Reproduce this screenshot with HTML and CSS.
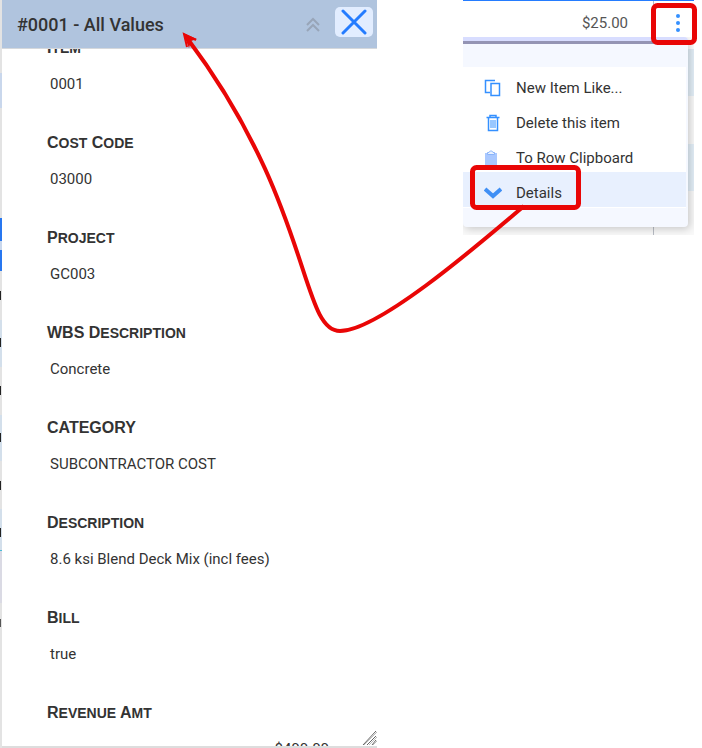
FILE: index.html
```html
<!DOCTYPE html>
<html lang="en">
<head>
  <meta charset="UTF-8">
  <title>#0001 - All Values</title>
  <link rel="stylesheet" href="styles.css">
</head>
<body>

<div class="page">

  <!-- Details panel -->
  <div class="panel-wrap">
    <div class="grid-edge"></div>
    <section class="panel">
      <header class="panel-header">
        <h1>#0001 - All Values</h1>
        <button class="collapse-btn" aria-label="Collapse">
          <svg width="14" height="16" viewBox="0 0 14 16"><path d="M1 8l6-6 6 6M1 14l6-6 6 6"/></svg>
        </button>
        <button class="close-btn" aria-label="Close">
          <svg width="26" height="26" viewBox="0 0 26 26"><path d="M2 2l22 22M24 2L2 24"/></svg>
        </button>
      </header>
      <div class="panel-body">
        <dl class="fields">
          <div class="field"><dt>I<small>tem</small></dt><dd>0001</dd></div>
          <div class="field"><dt>C<small>ost</small> C<small>ode</small></dt><dd>03000</dd></div>
          <div class="field"><dt>P<small>roject</small></dt><dd>GC003</dd></div>
          <div class="field"><dt>WBS D<small>escription</small></dt><dd>Concrete</dd></div>
          <div class="field"><dt>CATEGORY</dt><dd>SUBCONTRACTOR COST</dd></div>
          <div class="field"><dt>D<small>escription</small></dt><dd>8.6 ksi Blend Deck Mix (incl fees)</dd></div>
          <div class="field"><dt>B<small>ill</small></dt><dd>true</dd></div>
          <div class="field"><dt>R<small>evenue</small> A<small>mt</small></dt><dd class="amount">$400.00</dd></div>
        </dl>
        <svg class="resize" width="15" height="16" viewBox="0 0 15 16">
          <path class="shade" d="M2 15L15 2M7 15l8-8M11 15l4-4"/>
          <path d="M1 15L14 1M5 15l9-9M10 15l4-5"/>
        </svg>
      </div>
    </section>
  </div>

  <!-- Row with open menu -->
  <section class="row-area">
    <div class="row">
      <span class="price">$25.00</span>
      <button class="more-btn" aria-label="More">
        <svg width="6" height="20" viewBox="0 0 6 20"><circle cx="3" cy="3" r="2"/><circle cx="3" cy="10" r="2"/><circle cx="3" cy="17" r="2"/></svg>
      </button>
    </div>
    <div class="menu">
      <div class="menu-top"></div>
      <div class="menu-list">
        <button class="menu-item">
          <svg width="18" height="18" viewBox="0 0 18 18"><path class="line" d="M6 13.500H1.500V1.500H11M7 4.500h8.500v12H7z"/></svg>
          New Item Like...
        </button>
        <button class="menu-item">
          <svg width="18" height="18" viewBox="0 0 18 18"><path class="line" d="M2.500 3.500h13M6 3V1.500h6V3M4.500 4v12.500h9V4"/><path class="thin" d="M7 6v8M9 6v8M11 6v8"/></svg>
          Delete this item
        </button>
        <button class="menu-item">
          <svg width="18" height="18" viewBox="0 0 18 18"><path class="clip" d="M1 4h12v14H1z"/><path class="clip-top" d="M3.500 5.500v-2H5c0-2 4-2 4 0h1.500v2z"/></svg>
          To Row Clipboard
        </button>
        <button class="menu-item selected">
          <svg width="18" height="18" viewBox="0 0 18 18"><path class="chevron" d="M1 5l8 7 8-7"/></svg>
          Details
        </button>
      </div>
      <div class="menu-bottom"></div>
    </div>
  </section>

  <!-- Callout boxes and arrow -->
  <svg class="callout" width="702" height="748" viewBox="0 0 702 748">
    <rect x="653.500" y="5.500" width="41" height="37" rx="4"/>
    <rect x="472.500" y="167.500" width="106" height="40" rx="4"/>
    <path class="arrow" d="M524 206C470 252 377 331 340 331C300 331 312 204 187 38"/>
    <path class="head" d="M183 33l14 6-6 2-2 7z"/>
    <path class="tip" d="M187 47l-3-13 12 6"/>
  </svg>
</div>

</body>
</html>
```

FILE: styles.css
```css
* {
  box-sizing: border-box;
}

body {
  margin: 0;
  background: #fff;
  color: #333;
  font-family: Roboto, "Liberation Sans", sans-serif;
  font-size: 15px;
  line-height: 24px;
}

button {
  font: inherit;
  color: inherit;
  border: none;
  background: none;
  padding: 0;
  cursor: pointer;
}

svg {
  display: block;
  fill: none;
}

.page {
  position: relative;
  display: flex;
  align-items: flex-start;
  gap: 86px;
  height: 100vh;
  overflow: hidden;
}

.panel-wrap {
  display: flex;
  flex: 0 1 377px;
  height: 100%;
}

/* sliver of the grid behind the panel */
.grid-edge {
  width: 2px;
  background:
    linear-gradient(#222, #222) 0 291px / 1px 9px no-repeat,
    linear-gradient(#222, #222) 0 338px / 1px 9px no-repeat,
    linear-gradient(#222, #222) 0 386px / 1px 9px no-repeat,
    linear-gradient(#222, #222) 0 433px / 1px 9px no-repeat,
    linear-gradient(#222, #222) 0 481px / 1px 9px no-repeat,
    linear-gradient(#222, #222) 0 528px / 1px 9px no-repeat,
    linear-gradient(#555, #555) 0 619px / 1px 8px no-repeat,
    linear-gradient(#e3e3e3 73px, #c9d7ec 73px 108px, #e3e3e3 108px 218px,
      #2877f0 218px 241px, #c9d7ec 241px 250px, #2877f0 250px 271px,
      #e3e3e3 271px 320px, #d3dfeb 320px 367px, #e3e3e3 367px 415px,
      #d3dfeb 415px 461px, #e3e3e3 461px 509px, #d3dfeb 509px 550px,
      #48bcd8 550px 551px, #dadae4 551px 603px, #e3e3e3 603px);
}

.panel {
  display: flex;
  flex: 1;
  flex-direction: column;
  min-width: 0;
  border-bottom: 2px solid #ddd;
}

.panel-header {
  display: flex;
  align-items: center;
  height: 49px;
  padding: 1px 4px 0 15px;
  background: #b0c4de;
  border-bottom: 1px solid #d5d8dc;
}

.panel-header h1 {
  flex: 1;
  margin: 0;
  font-size: 18px;
  font-weight: 500;
}

.collapse-btn {
  margin-right: 15px;
}

.collapse-btn path {
  stroke: #98a5b8;
  stroke-width: 2;
}

.close-btn {
  display: flex;
  align-items: center;
  justify-content: center;
  width: 38px;
  height: 30px;
  margin-bottom: 6px;
  border-radius: 5px;
  background: #e2edff;
}

.close-btn path {
  stroke: #247cff;
  stroke-width: 3;
  stroke-linecap: round;
}

.panel-body {
  position: relative;
  flex: 1;
  min-height: 0;
  overflow: hidden;
}

/* list is scrolled a little under the header */
.fields {
  display: flex;
  flex-direction: column;
  gap: 35px;
  margin: -13px 0 0;
  padding: 0 48px 0 45px;
}

.field dt {
  height: 24px;
  font-family: "Liberation Sans", Arial, sans-serif;
  font-size: 16px;
  font-weight: bold;
}

.field small {
  font-size: 14px;
  text-transform: uppercase;
}

.field dd {
  margin: 12px 0 0 3px;
}

.field .amount {
  text-align: right;
}

.resize {
  position: absolute;
  right: 0;
  bottom: 0;
}

.resize path {
  stroke: #666;
}

.resize .shade {
  stroke: #bbb;
}

.row-area {
  flex: 0 1 231px;
  height: 235px;
  background:
    linear-gradient(#b8bcc4, #b8bcc4) 190px 0 / 1px 100% no-repeat,
    linear-gradient(#fff 49px, #e3eff8 49px 96px, #f9f9f9 96px 144px,
      #e3eff8 144px 191px, #f9f9f9 191px);
}

.row {
  display: flex;
  align-items: center;
  height: 37px;
  padding-top: 8px;
  border-top: 1px solid #247cff;
}

.price {
  flex: 1;
  padding-right: 25px;
  text-align: right;
  color: #555;
}

.more-btn {
  display: flex;
  justify-content: center;
  width: 41px;
  padding-left: 8px;
}

.more-btn circle {
  fill: #3490ff;
}

.menu {
  margin-right: 6px;
  padding-right: 2px;
  border-radius: 0 4px 4px 4px;
  overflow: hidden;
  background: #f5f8ff;
  box-shadow: 2px 2px 8px rgba(0, 0, 0, 0.2);
  clip-path: inset(0 -6px -8px 0);
}

.menu-top {
  height: 30px;
  margin-right: -2px;
  background: linear-gradient(#d8ddff 4px, #9494b4 4px 7px, #f5f8ff 7px);
}

.menu-list {
  padding-bottom: 1px;
  background: #fff;
}

.menu-item {
  display: flex;
  align-items: center;
  gap: 14px;
  width: 100%;
  height: 35px;
  padding: 6px 0 0 21px;
  text-align: left;
}

.menu-item.selected {
  background: #e8f0fe;
}

.menu-bottom {
  height: 19px;
}

.line {
  stroke: #3490ff;
  stroke-width: 1.5;
}

.thin {
  stroke: #3490ff;
}

.clip {
  fill: #a9c8ff;
}

.clip-top {
  fill: #e8f1ff;
  stroke: #8ab4fa;
}

.chevron {
  stroke: #3f8ff5;
  stroke-width: 4;
}

.callout {
  position: absolute;
  top: 0;
  left: 0;
  pointer-events: none;
  stroke: #e90606;
  stroke-width: 5;
}

.callout .arrow {
  stroke-width: 4;
}

.callout .head {
  fill: #e90606;
  stroke: none;
}

.callout .tip {
  stroke-width: 2;
}
```
